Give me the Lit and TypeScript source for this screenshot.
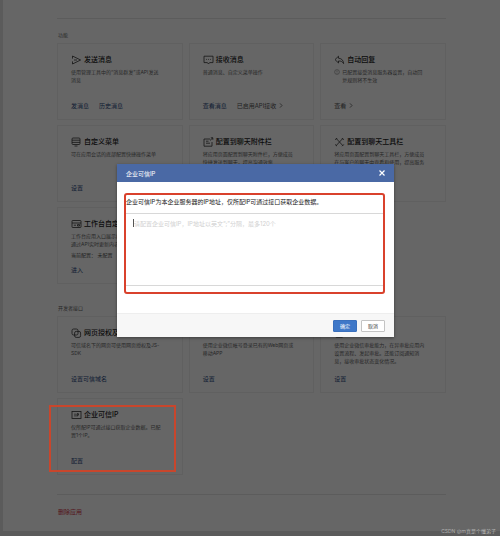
import { LitElement, html, css, svg, nothing, TemplateResult } from "lit";
import { customElement, property } from "lit/decorators.js";

interface CardLink {
  text: string;
  muted?: boolean;
  arrow?: boolean;
}

interface Card {
  icon: string;
  title: string;
  lines: string[];
  note?: string;
  info?: boolean;
  links: CardLink[];
  marked?: boolean;
}

const icons: Record<string, TemplateResult> = {
  send: svg`<path d="M1.5 3.6V1L9.6 5 1.5 9V6.4M3 5H6"/>`,
  chat: svg`<path d="M1 1.2H10V7.6H6.6L5.5 9 4.4 7.6H1ZM3.2 4.4H4M5.1 4.4H5.9M7 4.4H7.8"/>`,
  reply: svg`<path d="M4.5 1.2 1 4.6 4.5 8V6C7 5.8 8.6 6.8 9.6 8.6 9.5 5.4 7.6 3.4 4.5 3.2Z"/>`,
  menu: svg`<rect x="1" y="1" width="8" height="6.5" rx="1"/><path d="M1 3.2H9M1 5.4H9M3.5 9H6.5"/>`,
  attach: svg`<path d="M7 2H1V9.2H9V5M3 4.2H5.5M3 6.2H7M7 3.5 9.8 .8M7.8 .8H9.8V2.8"/>`,
  tools: svg`<path d="M2 1.2 9 8.8M9 1.2 2 8.8M1.2 3 3.2 1M7.8 1 9.8 3M1.2 7.4 3 9.2M8 9.2 9.8 7.4"/>`,
  bench: svg`<rect x="1" y="1.5" width="9" height="7" rx=".6"/><path d="M1 4H10M2.8 6.2H5M6.5 5.6H8.5V7H6.5Z"/>`,
  copy: svg`<rect x="1" y="1" width="6" height="6" rx="1.6"/><rect x="3.6" y="3.4" width="6" height="6" rx="1.6"/>`,
  login: svg`<rect x="1" y="1.5" width="9" height="7" rx="1"/><path d="M3 5H7M5.5 3.5 7 5 5.5 6.5"/>`,
  approve: svg`<rect x="1.5" y="1" width="7.5" height="8.2" rx=".8"/><path d="M3.3 5 4.8 6.5 7.3 3.6"/>`,
  ip: svg`<rect x="1" y="1.5" width="9" height="7"/><path d="M4 3.5V6.6M6 6.6V3.7H7.4V5.2H6"/>`,
};

const features: Card[] = [
  { icon: "send", title: "发送消息", lines: ["使用管理工具中的“消息群发”或API发送", "消息"], links: [{ text: "发消息" }, { text: "历史消息" }] },
  { icon: "chat", title: "接收消息", lines: ["普通消息、自定义菜单操作"], links: [{ text: "查看消息" }, { text: "已启用API接收", muted: true, arrow: true }] },
  { icon: "reply", title: "自动回复", lines: ["已配置接受消息服务器设置，自动回", "复规则将不生效"], info: true, links: [{ text: "查看", muted: true, arrow: true }] },
  { icon: "menu", title: "自定义菜单", lines: ["可在应用会话的底部配置快捷操作菜单"], links: [{ text: "设置" }] },
  { icon: "attach", title: "配置到聊天附件栏", lines: ["将应用页面配置到聊天附件栏，方便成员", "快捷发送到聊天，提高沟通效率"], links: [] },
  { icon: "tools", title: "配置到聊天工具栏", lines: ["将应用页面配置到聊天工具栏，方便成员", "在与客户的聊天中查看和使用，提高服务"], links: [] },
  { icon: "bench", title: "工作台自定义展示", lines: ["工作台应用入口展示内容，可", "通过API实时更新内容"], note: "当前配置： 未配置", links: [{ text: "进入" }] },
];

const developer: Card[] = [
  { icon: "copy", title: "网页授权及JS-SDK", lines: ["可信域名下的网页可使用网页授权及JS-", "SDK"], links: [{ text: "设置可信域名" }] },
  { icon: "login", title: "企业微信授权登录", lines: ["使用企业微信帐号登录已有的Web网页或", "移动APP"], links: [{ text: "设置" }] },
  { icon: "approve", title: "审批接口", lines: ["使用企业微信审批能力，在异审批应用内", "设置流程、发起审批。还能订阅通知消", "息，接收审批状态变化情况。"], links: [{ text: "设置" }] },
  { icon: "ip", title: "企业可信IP", lines: ["仅所配IP可通过接口获取企业数据。已配", "置1个IP。"], links: [{ text: "配置" }], marked: true },
];

@customElement("feature-card")
export class FeatureCard extends LitElement {
  @property({ attribute: false }) card!: Card;

  static styles = css`
    :host {
      display: flex;
      flex-direction: column;
      box-sizing: border-box;
      position: relative;
      min-height: 77px;
      padding: 11px 0 8px 13px;
      border: 1px solid #f0f0f0;
      white-space: nowrap;
    }
    .title {
      display: flex;
      align-items: center;
      gap: 2px;
      margin: 0;
      font-size: 7px;
      font-weight: 500;
      line-height: 10px;
      color: #1c1c1c;
    }
    .icon {
      width: 11px;
      height: 10px;
      fill: none;
      stroke: #333;
      stroke-width: 0.8;
    }
    .desc {
      display: flex;
      gap: 2px;
      margin: 3px 0 0;
      font-size: 5px;
      line-height: 8px;
      color: #666;
    }
    .info {
      width: 6px;
      height: 6px;
      margin-top: 1px;
      fill: none;
      stroke: #888;
      stroke-width: 0.6;
    }
    .line {
      display: block;
    }
    .note {
      margin: 3px 0 0;
      font-size: 5px;
      line-height: 8px;
      color: #555;
    }
    .links {
      display: flex;
      gap: 10px;
      margin-top: auto;
      font-size: 6px;
      line-height: 10px;
    }
    .link {
      color: #2c4a80;
      text-decoration: none;
    }
    .muted {
      color: #555;
    }
    .arrow {
      width: 4px;
      height: 5px;
      margin-left: 3px;
      fill: none;
      stroke: #555;
      stroke-width: 0.8;
    }
    .mark {
      position: absolute;
      inset: 6px 6px 2px -9px;
      z-index: 3;
      border: 2px solid #c8462c;
      pointer-events: none;
    }
  `;

  render() {
    const c = this.card;
    return html`
      <h3 class="title">
        <svg class="icon" viewBox="0 0 11 10" aria-hidden="true">${icons[c.icon]}</svg>
        <span>${c.title}</span>
      </h3>
      <p class="desc">
        ${c.info
          ? html`<svg class="info" viewBox="0 0 6 6" aria-hidden="true"><circle cx="3" cy="3" r="2.4" /><path d="M3 1.5V3.4M3 4V4.6" /></svg>`
          : nothing}
        <span>${c.lines.map((l) => html`<span class="line">${l}</span>`)}</span>
      </p>
      ${c.note ? html`<p class="note">${c.note}</p>` : nothing}
      <div class="links">
        ${c.links.map(
          (l) => html`<a class="link ${l.muted ? "muted" : ""}" href="#">${l.text}${l.arrow
            ? html`<svg class="arrow" viewBox="0 0 4 5" aria-hidden="true"><path d="M1 .4 3 2.5 1 4.6" /></svg>`
            : nothing}</a>`
        )}
      </div>
      ${c.marked ? html`<div class="mark"></div>` : nothing}
    `;
  }
}

@customElement("ip-dialog")
export class IpDialog extends LitElement {
  static styles = css`
    :host {
      display: block;
      width: 277px;
      max-width: 100%;
      background: #fff;
      font-size: 6px;
      box-shadow: 0 1px 3px rgba(0, 0, 0, 0.4);
    }
    .head {
      display: flex;
      align-items: center;
      justify-content: space-between;
      height: 18px;
      padding: 0 8px 0 9px;
      background: #4a69a5;
      color: #fff;
    }
    .name {
      margin: 0;
      font-size: 6px;
      font-weight: 400;
    }
    .close {
      display: flex;
      padding: 0;
      border: 0;
      background: none;
    }
    .cross {
      width: 8px;
      height: 8px;
      fill: none;
      stroke: #fff;
      stroke-width: 1.2;
    }
    .body {
      padding: 11px 9px 19px 7px;
    }
    .field {
      display: flex;
      flex-direction: column;
      padding-bottom: 6px;
      border: 2px solid #d9412c;
      border-radius: 3px;
    }
    .label {
      padding: 2px 0 7px;
      line-height: 9px;
      color: #222;
    }
    .input {
      box-sizing: border-box;
      width: 100%;
      height: 73px;
      padding: 5px 8px;
      border: solid #d8d8d8;
      border-width: 1px 0;
      outline: 0;
      resize: none;
      background: #fff;
      font: inherit;
      line-height: 10px;
    }
    .input::placeholder {
      color: #d0d0d0;
      opacity: 1;
    }
    .box {
      display: grid;
      position: relative;
    }
    .caret {
      position: absolute;
      top: 6px;
      left: 7px;
      width: 1px;
      height: 8px;
      background: #555;
    }
    .foot {
      display: flex;
      justify-content: flex-end;
      gap: 4px;
      padding: 6px 9px 5px;
      border-top: 1px solid #eee;
      background: #f7f7f7;
    }
    .btn {
      width: 24px;
      height: 12px;
      padding: 0;
      border: 1px solid #c4c4c4;
      border-radius: 1px;
      background: #fff;
      color: #333;
      font: inherit;
      font-size: 5px;
      line-height: 10px;
    }
    .primary {
      border-color: #3a70bd;
      background: #3f78c8;
      color: #fff;
    }
  `;

  render() {
    return html`
      <header class="head">
        <h2 class="name">企业可信IP</h2>
        <button class="close" aria-label="关闭">
          <svg class="cross" viewBox="0 0 8 8"><path d="M1.5 1.5 6.5 6.5M6.5 1.5 1.5 6.5" /></svg>
        </button>
      </header>
      <div class="body">
        <div class="field">
          <label class="label" for="ips">企业可信IP为本企业服务器的IP地址，仅所配IP可通过接口获取企业数据。</label>
          <div class="box">
            <textarea class="input" id="ips" placeholder="请配置企业可信IP，IP地址以英文“;”分隔，最多120个"></textarea>
            <span class="caret"></span>
          </div>
        </div>
      </div>
      <footer class="foot">
        <button class="btn primary">确定</button>
        <button class="btn">取消</button>
      </footer>
    `;
  }
}

@customElement("app-root")
export class AppRoot extends LitElement {
  static styles = css`
    :host {
      display: block;
      position: relative;
      min-height: 100vh;
      background: #e4e4e4;
      font-family: Inter, "Noto Sans CJK SC", sans-serif;
    }
    .page {
      margin-left: 3px;
      padding: 18px 54px 14px;
      background: #fff;
    }
    .section {
      border-top: 1px solid #e6e6e6;
      padding-top: 12px;
    }
    .plain {
      border-top: 0;
      padding-top: 20px;
    }
    .heading {
      margin: 0 0 4px 1px;
      font-size: 5px;
      font-weight: 400;
      line-height: 8px;
      color: #666;
    }
    .grid {
      display: grid;
      grid-template-columns: repeat(3, minmax(0, 1fr));
      gap: 5px 6px;
    }
    .danger {
      margin-top: 19px;
      padding-top: 12px;
      border-top: 1px solid #e6e6e6;
      font-size: 6px;
      line-height: 10px;
    }
    .remove {
      margin-left: 1px;
      color: #d03448;
      text-decoration: none;
    }
    .bottom {
      height: 5px;
    }
    .overlay {
      position: absolute;
      inset: 0;
      z-index: 2;
      display: flex;
      justify-content: center;
      align-items: flex-start;
      padding: 164px 0 0 11px;
      background: rgba(0, 0, 0, 0.6);
    }
    .credit {
      position: absolute;
      right: 4px;
      bottom: 1px;
      z-index: 3;
      font-size: 5px;
      line-height: 8px;
      color: #b0b0b0;
    }
  `;

  private cards(list: Card[]) {
    return html`<div class="grid">${list.map((c) => html`<feature-card .card=${c}></feature-card>`)}</div>`;
  }

  render() {
    return html`
      <main class="page">
        <section class="section">
          <h2 class="heading">功能</h2>
          ${this.cards(features)}
        </section>
        <section class="section plain">
          <h2 class="heading">开发者接口</h2>
          ${this.cards(developer)}
        </section>
        <div class="danger"><a class="remove" href="#">删除应用</a></div>
      </main>
      <div class="bottom"></div>
      <div class="overlay"><ip-dialog role="dialog" aria-label="企业可信IP"></ip-dialog></div>
      <div class="credit">CSDN @m真是个懂弟子</div>
    `;
  }
}
